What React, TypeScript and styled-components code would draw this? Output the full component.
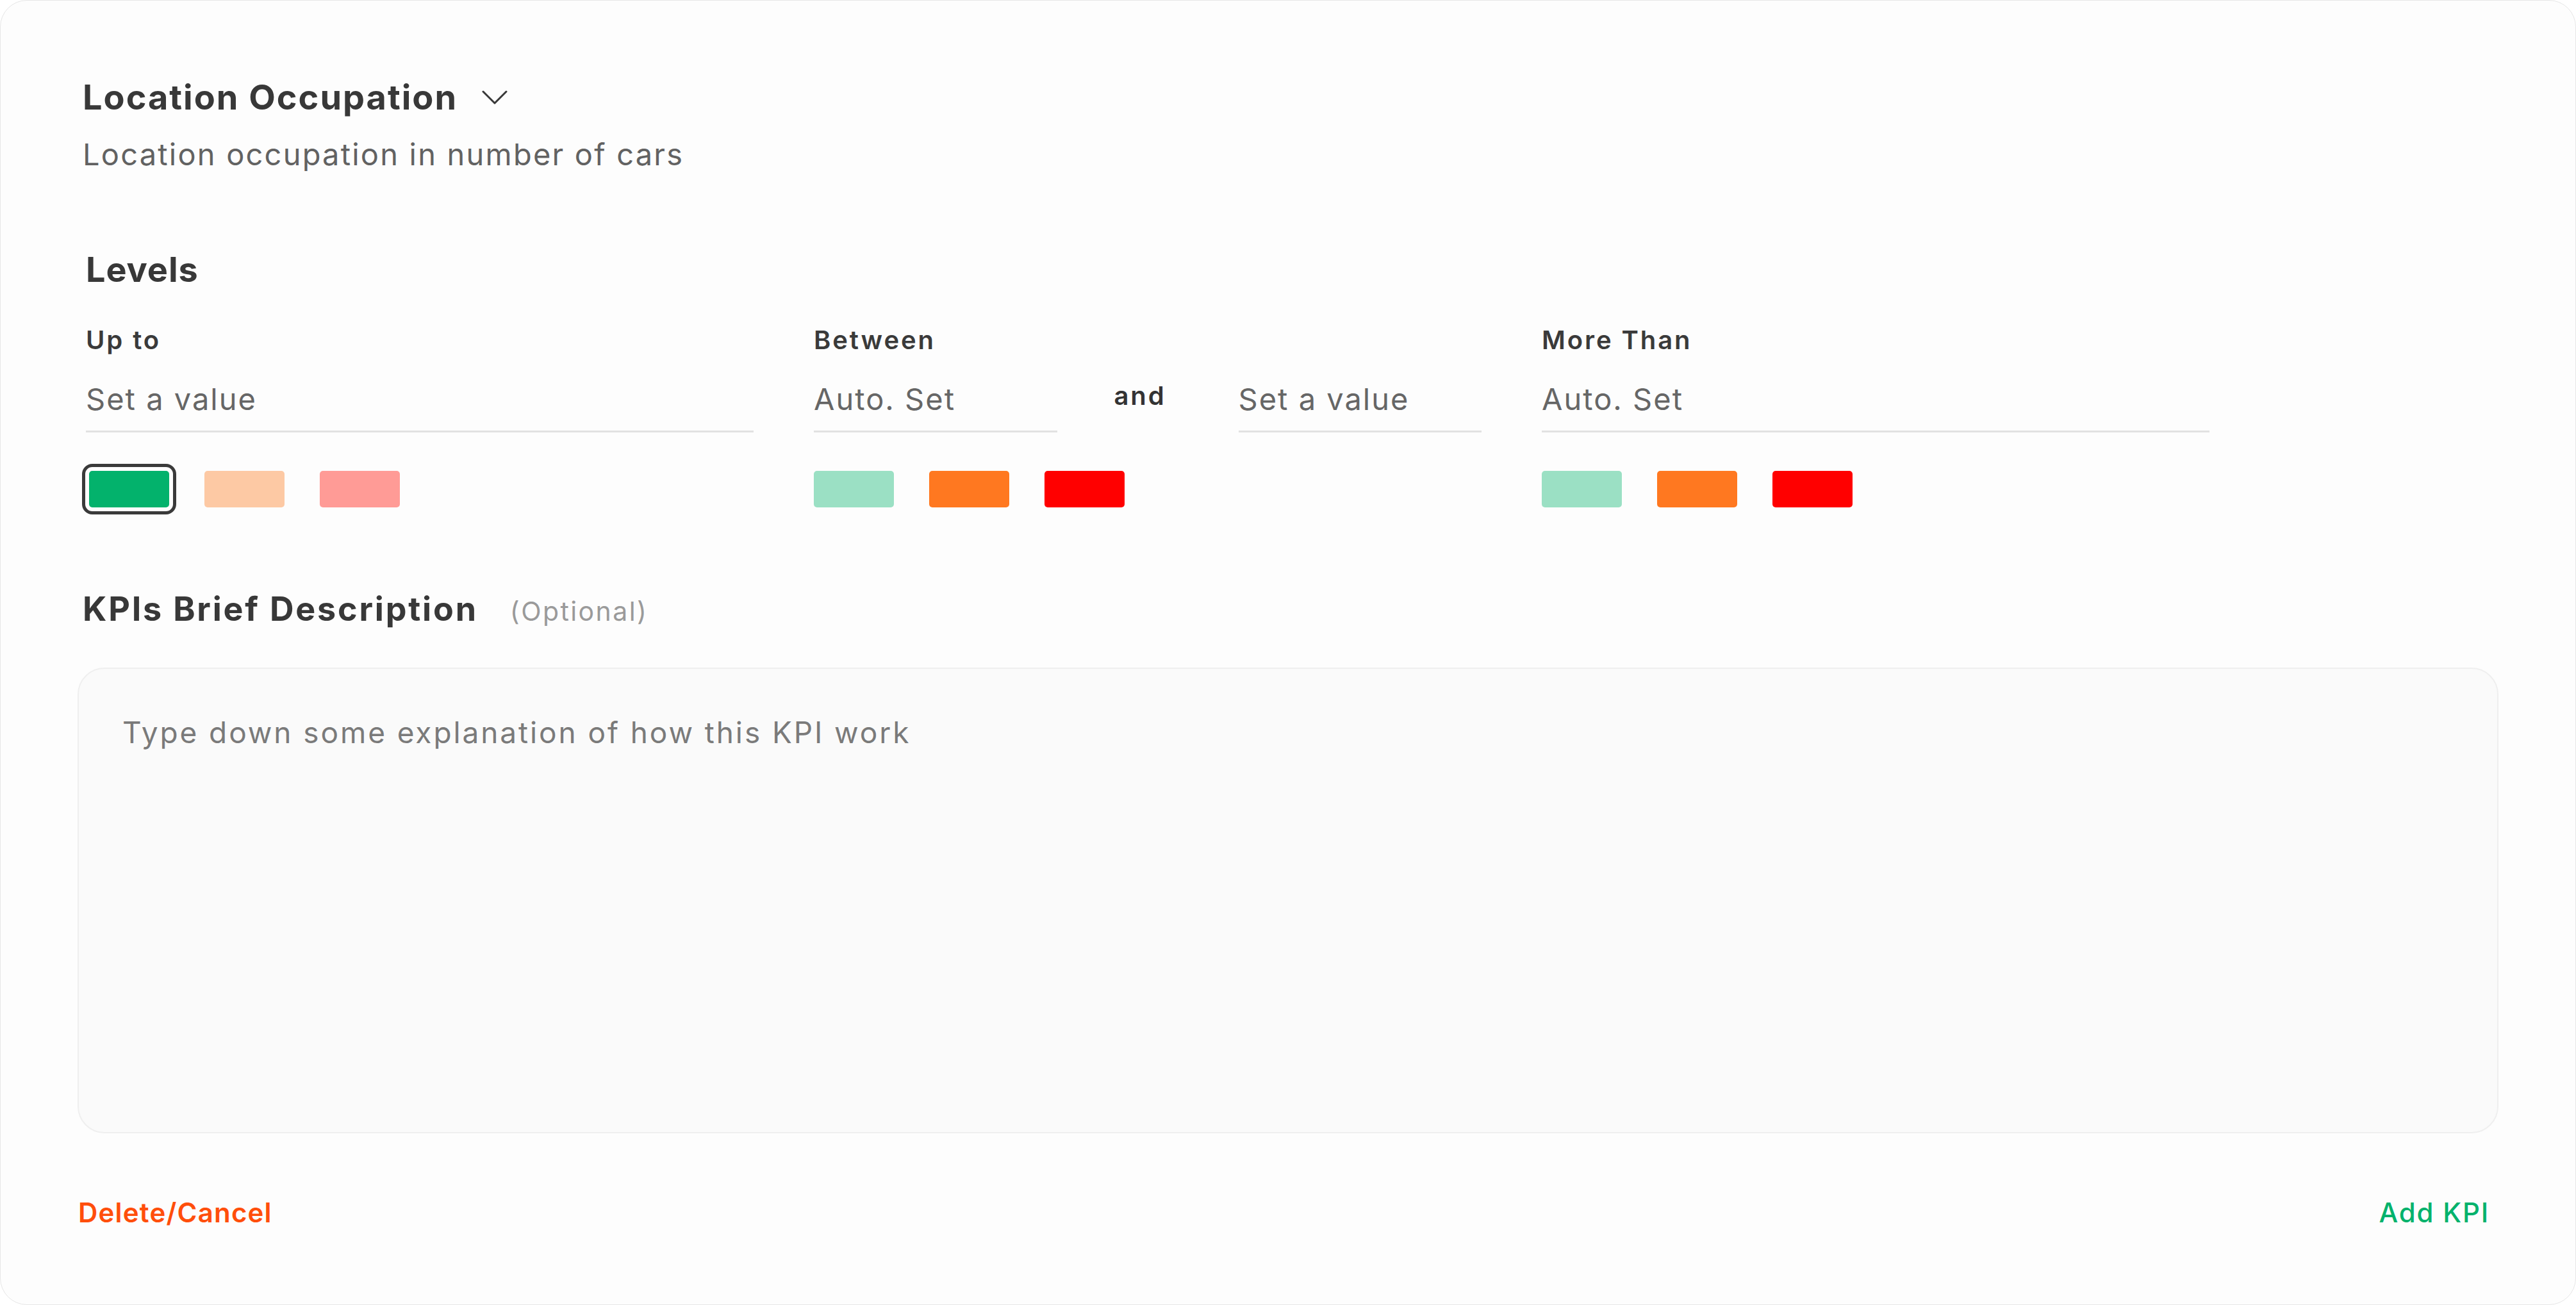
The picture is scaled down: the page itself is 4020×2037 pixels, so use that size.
import React from 'react'
import styled, { createGlobalStyle } from 'styled-components'

const FONT = `Inter, 'Open Sans', 'Noto Sans', sans-serif`

type Level = {
  label: string
  inputs: string[]
  swatches: string[]
  selected?: number
}

const LEVELS: Level[] = [
  { label: 'Up to', inputs: ['Set a value'], swatches: ['#03b26c', '#fdc9a4', '#ff9b96'], selected: 0 },
  { label: 'Between', inputs: ['Auto. Set', 'Set a value'], swatches: ['#9be0c4', '#ff7820', '#ff0000'] },
  { label: 'More Than', inputs: ['Auto. Set'], swatches: ['#9be0c4', '#ff7820', '#ff0000'] },
]

function ChevronDown(): React.ReactElement {
  return (
    <svg width="40" height="24" viewBox="0 0 40 24" fill="none">
      <polyline points="2,3 20,21 38,3" stroke="#383838" strokeWidth="3" strokeLinecap="round" strokeLinejoin="round" />
    </svg>
  )
}

function LevelField({ level }: { level: Level }): React.ReactElement {
  const hasSelection = level.selected !== undefined
  return (
    <LevelColumn>
      <LevelLabel>{level.label}</LevelLabel>
      <InputRow>
        {level.inputs.map((placeholder, i) => (
          <React.Fragment key={placeholder + i}>
            {i > 0 && <AndLabel>and</AndLabel>}
            <ValueInput placeholder={placeholder} />
          </React.Fragment>
        ))}
      </InputRow>
      <SwatchRow $inset={hasSelection}>
        {level.swatches.map((color, i) => (
          <Swatch key={color + i} $color={color} $selected={level.selected === i} />
        ))}
      </SwatchRow>
    </LevelColumn>
  )
}

export default function App(): React.ReactElement {
  return (
    <>
      <GlobalStyle />
      <Card>
        <TitleRow>
          <Title>Location Occupation</Title>
          <ChevronDown />
        </TitleRow>
        <Subtitle>Location occupation in number of cars</Subtitle>

        <SectionTitle>Levels</SectionTitle>
        <LevelsGrid>
          {LEVELS.map((level) => (
            <LevelField key={level.label} level={level} />
          ))}
        </LevelsGrid>

        <DescriptionHeader>
          <DescriptionTitle>KPIs Brief Description</DescriptionTitle>
          <OptionalHint>(Optional)</OptionalHint>
        </DescriptionHeader>
        <DescriptionBox placeholder="Type down some explanation of how this KPI work" />

        <Footer>
          <TextButton $color="#ff4e0b" $weight={600} $spacing={1.2}>
            Delete/Cancel
          </TextButton>
          <TextButton $color="#03b26c" $weight={500} $spacing={1.8}>
            Add KPI
          </TextButton>
        </Footer>
      </Card>
    </>
  )
}

const GlobalStyle = createGlobalStyle`
  html, body {
    margin: 0;
    padding: 0;
    background: #ffffff;
  }
  body {
    font-family: ${FONT};
    -webkit-font-smoothing: antialiased;
  }
  * {
    box-sizing: border-box;
  }
`

const Card = styled.div`
  width: 4020px;
  height: 2037px;
  display: flex;
  flex-direction: column;
  padding: 119px 120px 0;
  background: #fdfdfd;
  border: 1px solid #e6e6e6;
  border-radius: 42px;
`

const TitleRow = styled.div`
  display: flex;
  align-items: center;
  gap: 38px;
  padding-left: 8px;
`

const Title = styled.h1`
  margin: 0;
  font-size: 54px;
  line-height: 64px;
  font-weight: 700;
  letter-spacing: 2px;
  color: #383838;
`

const Subtitle = styled.p`
  margin: 29px 0 0;
  padding-left: 8px;
  font-size: 47px;
  line-height: 56px;
  font-weight: 400;
  letter-spacing: 2.2px;
  color: #626262;
`

const SectionTitle = styled.h2`
  margin: 120px 0 0;
  padding-left: 13px;
  font-size: 54px;
  line-height: 64px;
  font-weight: 700;
  letter-spacing: 0.9px;
  color: #383838;
`

const LevelsGrid = styled.div`
  display: grid;
  grid-template-columns: repeat(3, 1042px);
  column-gap: 94px;
  margin-top: 54px;
  padding-left: 13px;
`

const LevelColumn = styled.div`
  display: flex;
  flex-direction: column;
`

const LevelLabel = styled.div`
  font-size: 40px;
  line-height: 48px;
  font-weight: 600;
  letter-spacing: 2.9px;
  color: #3a3a3a;
`

const InputRow = styled.div`
  display: flex;
  align-items: flex-start;
  margin-top: 39px;
`

const ValueInput = styled.input`
  flex: 1;
  min-width: 0;
  height: 81px;
  margin: 0;
  padding: 0 0 22px;
  border: none;
  border-bottom: 3px solid #e2e2e2;
  background: transparent;
  font-family: ${FONT};
  font-size: 47px;
  line-height: 56px;
  letter-spacing: 2px;
  color: #555555;
  outline: none;

  &::placeholder {
    color: #666666;
  }
`

const AndLabel = styled.span`
  flex: 0 0 283px;
  margin-top: -4px;
  padding-right: 24px;
  text-align: center;
  font-size: 40px;
  line-height: 56px;
  font-weight: 600;
  letter-spacing: 2.8px;
  color: #333333;
`

const SwatchRow = styled.div<{ $inset?: boolean }>`
  display: flex;
  align-items: center;
  gap: 55px;
  height: 80px;
  margin-top: 48px;
  padding-left: ${(p) => (p.$inset ? '5px' : '0')};
`

const Swatch = styled.div<{ $color: string; $selected?: boolean }>`
  width: 125px;
  height: 57px;
  border-radius: 5px;
  background: ${(p) => p.$color};
  outline: ${(p) => (p.$selected ? '5px solid #3a3a3a' : 'none')};
  outline-offset: 6px;
`

const DescriptionHeader = styled.div`
  display: flex;
  align-items: baseline;
  gap: 50px;
  margin-top: 116px;
  padding-left: 8px;
`

const DescriptionTitle = styled.h2`
  margin: 0;
  font-size: 52px;
  line-height: 64px;
  font-weight: 700;
  letter-spacing: 2.8px;
  color: #383838;
`

const OptionalHint = styled.span`
  font-size: 41px;
  font-weight: 400;
  letter-spacing: 2.4px;
  color: #9a9a9a;
`

const DescriptionBox = styled.textarea`
  display: block;
  width: 100%;
  height: 727px;
  margin-top: 59px;
  padding: 71px 68px 64px;
  border: 2px solid #efefef;
  border-radius: 42px;
  background: #fafafa;
  resize: none;
  outline: none;
  font-family: ${FONT};
  font-size: 46px;
  line-height: 56px;
  letter-spacing: 2.9px;
  color: #555555;

  &::placeholder {
    color: #7a7a7a;
  }
`

const Footer = styled.div`
  display: flex;
  justify-content: space-between;
  align-items: center;
  margin-top: 96px;
  padding: 0 14px 0 1px;
`

const TextButton = styled.button<{ $color: string; $weight: number; $spacing: number }>`
  padding: 0;
  border: none;
  background: none;
  cursor: pointer;
  font-family: ${FONT};
  font-size: 42px;
  line-height: 56px;
  font-weight: ${(p) => p.$weight};
  letter-spacing: ${(p) => p.$spacing}px;
  color: ${(p) => p.$color};
`
